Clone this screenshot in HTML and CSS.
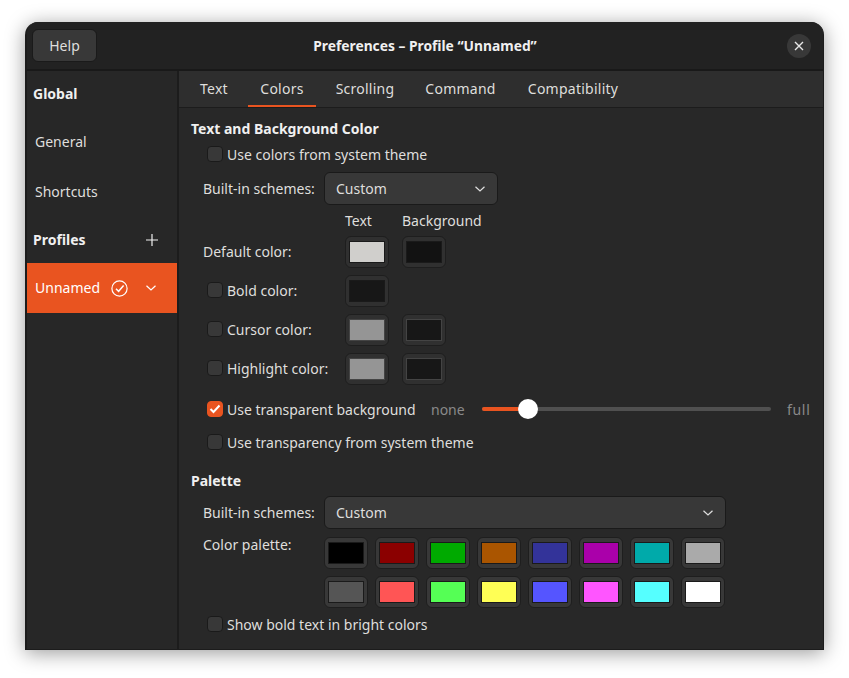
FILE: index.html
```html
<!DOCTYPE html>
<html lang="en">
<head>
    <meta charset="utf-8">
    <title>Preferences</title>
    <link rel="stylesheet" href="styles.css">
</head>
<body>
    <div class="window">
        <header class="titlebar">
            <button class="help">Help</button>
            <div class="title">Preferences – Profile “Unnamed”</div>
            <button class="close">
                <svg width="10" height="10" viewBox="0 0 10 10"><path d="M1 1 9 9M9 1 1 9" stroke="#e8e8e8" stroke-width="1.4" fill="none"/></svg>
            </button>
        </header>

        <div class="main">
            <nav class="sidebar">
                <div class="side-row side-head side-global">Global</div>
                <div class="side-row side-item">General</div>
                <div class="side-row side-item">Shortcuts</div>
                <div class="side-row side-head side-profiles">
                    <span>Profiles</span>
                    <svg class="plus" width="12" height="12" viewBox="0 0 12 12"><path d="M6 0V12M0 6H12" stroke="#f2f2f2" stroke-width="1.2" fill="none"/></svg>
                </div>
                <div class="side-row side-item selected">
                    <span class="profile-name">Unnamed</span>
                    <svg class="profile-check" width="17" height="17" viewBox="0 0 17 17"><circle cx="8.5" cy="8.5" r="7.6" stroke="#fff" stroke-width="1.2" fill="none"/><path d="M5 8.8 7.6 11.3 12.6 5.6" stroke="#fff" stroke-width="1.5" fill="none"/></svg>
                    <svg class="profile-arrow" width="10" height="6" viewBox="0 0 10 6"><path d="M.5 .7 5 5 9.5 .7" stroke="#fff" stroke-width="1.2" fill="none"/></svg>
                </div>
            </nav>

            <section class="content">
                <div class="tabs">
                    <div class="tab">Text</div>
                    <div class="tab active">Colors</div>
                    <div class="tab">Scrolling</div>
                    <div class="tab">Command</div>
                    <div class="tab">Compatibility</div>
                </div>

                <div class="page">
                    <h2 class="heading">Text and Background Color</h2>
                    <div class="check-row first-check"><span class="check"></span>Use colors from system theme</div>

                    <div class="combo-row">
                        <span class="label combo-label">Built-in schemes:</span>
                        <div class="combo combo-short"><span>Custom</span>
                            <svg width="10" height="6" viewBox="0 0 10 6"><path d="M.5 .7 5 5 9.5 .7" stroke="#dedede" stroke-width="1.2" fill="none"/></svg>
                        </div>
                    </div>

                    <div class="color-grid">
                        <span class="col-head">Text</span>
                        <span class="col-head">Background</span>

                        <span class="label grid-label">Default color:</span>
                        <span class="swatch"><i style="background:#d0cfcc"></i></span>
                        <span class="swatch"><i style="background:#121212"></i></span>

                        <span class="check-row"><span class="check"></span>Bold color:</span>
                        <span class="swatch"><i style="background:#171717"></i></span>
                        <span></span>

                        <span class="check-row"><span class="check"></span>Cursor color:</span>
                        <span class="swatch dim"><i style="background:#959595"></i></span>
                        <span class="swatch dim"><i style="background:#171717"></i></span>

                        <span class="check-row"><span class="check"></span>Highlight color:</span>
                        <span class="swatch dim"><i style="background:#959595"></i></span>
                        <span class="swatch dim"><i style="background:#171717"></i></span>
                    </div>

                    <div class="check-row slider-row">
                        <span class="check on">
                            <svg width="12" height="10" viewBox="0 0 12 10"><path d="M1.5 5 4.5 8 10.5 1.5" stroke="#fff" stroke-width="2" fill="none"/></svg>
                        </span>
                        <span class="slider-label">Use transparent background</span>
                        <span class="dim-text none">none</span>
                        <div class="slider"><div class="slider-fill" style="width:46px"></div><div class="slider-thumb"></div></div>
                        <span class="dim-text full">full</span>
                    </div>
                    <div class="check-row theme-check"><span class="check"></span>Use transparency from system theme</div>

                    <h2 class="heading palette-heading">Palette</h2>
                    <div class="combo-row palette-combo">
                        <span class="label combo-label">Built-in schemes:</span>
                        <div class="combo combo-wide"><span>Custom</span>
                            <svg width="10" height="6" viewBox="0 0 10 6"><path d="M.5 .7 5 5 9.5 .7" stroke="#dedede" stroke-width="1.2" fill="none"/></svg>
                        </div>
                    </div>

                    <div class="palette-row">
                        <span class="label combo-label palette-label">Color palette:</span>
                        <div class="palette">
                            <span class="swatch light"><i style="background:#000000"></i></span>
                            <span class="swatch light"><i style="background:#8b0000"></i></span>
                            <span class="swatch light"><i style="background:#00aa00"></i></span>
                            <span class="swatch light"><i style="background:#aa5500"></i></span>
                            <span class="swatch light"><i style="background:#333399"></i></span>
                            <span class="swatch light"><i style="background:#aa00aa"></i></span>
                            <span class="swatch light"><i style="background:#00aaaa"></i></span>
                            <span class="swatch light"><i style="background:#aaaaaa"></i></span>
                            <span class="swatch light"><i style="background:#555555"></i></span>
                            <span class="swatch light"><i style="background:#ff5555"></i></span>
                            <span class="swatch light"><i style="background:#55ff55"></i></span>
                            <span class="swatch light"><i style="background:#ffff55"></i></span>
                            <span class="swatch light"><i style="background:#5555ff"></i></span>
                            <span class="swatch light"><i style="background:#ff55ff"></i></span>
                            <span class="swatch light"><i style="background:#55ffff"></i></span>
                            <span class="swatch light"><i style="background:#ffffff"></i></span>
                        </div>
                    </div>
                    <div class="check-row bold-check"><span class="check"></span>Show bold text in bright colors</div>
                </div>
            </section>
        </div>
    </div>
</body>
</html>
```

FILE: styles.css
```css
html, body {
    margin: 0;
    padding: 0;
    background: #fff;
}
body {
    height: 678px;
    padding: 22px 25px 0;
    box-sizing: border-box;
    overflow: hidden;
    font-family: "Noto Sans", sans-serif;
    font-size: 14px;
    color: #dfdedc;
}
.window {
    width: 799px;
    height: 628px;
    display: flex;
    flex-direction: column;
    box-sizing: border-box;
    border: 1px solid #1c1c1c;
    border-top: 0;
    border-left-width: 2px;
    border-radius: 13px 13px 0 0;
    background: #282828;
    box-shadow: 0 3px 20px rgba(0, 0, 0, 0.4);
    overflow: hidden;
}
.titlebar {
    height: 47px;
    flex: none;
    display: grid;
    grid-template-columns: 1fr auto 1fr;
    align-items: center;
    background: #222222;
    border-bottom: 2px solid #191919;
}
.help {
    margin-left: 5px;
    width: 65px;
    height: 33px;
    border: 1px solid #1a1a1a;
    border-radius: 6px;
    background: #383838;
    color: #dfdedc;
    font: inherit;
}
.title {
    font-weight: 700;
    font-size: 13.8px;
    color: #f0f0f0;
}
.close {
    justify-self: end;
    margin-right: 12px;
    width: 24px;
    height: 24px;
    padding: 0;
    border: 0;
    border-radius: 50%;
    background: #383838;
    display: flex;
    align-items: center;
    justify-content: center;
}
.main {
    flex: 1;
    display: flex;
    min-height: 0;
}

/* sidebar */
.sidebar {
    width: 150px;
    flex: none;
    background: #272727;
    border-right: 2px solid #1c1c1c;
}
.side-row {
    height: 50px;
    display: flex;
    align-items: center;
    box-sizing: border-box;
}
.side-head {
    padding-left: 6px;
    font-weight: 700;
    color: #f0f0f0;
}
.side-global {
    height: 45px;
}
.side-item {
    padding-left: 8px;
}
.side-profiles {
    justify-content: space-between;
    padding-right: 19px;
    height: 47px;
}
.selected {
    background: #e95420;
    color: #fff;
}
.profile-name {
    margin-top: -2px;
}
.profile-check {
    margin-left: 11px;
}
.profile-arrow {
    margin-left: 18px;
}

/* tabs */
.content {
    flex: 1;
    min-width: 0;
}
.tabs {
    height: 37px;
    box-sizing: border-box;
    display: grid;
    grid-template-columns: 52px 68px 82px 93px 116px;
    gap: 8px;
    padding-left: 9px;
    background: #2e2e2e;
    border-bottom: 1px solid #1c1c1c;
    letter-spacing: 0.25px;
}
.tab {
    text-align: center;
    line-height: 35px;
    height: 36px;
    box-sizing: border-box;
}
.active {
    border-bottom: 2px solid #e95420;
}

/* page */
.page {
    padding: 10px 0 0 12px;
}
.heading {
    margin: 0;
    height: 22px;
    line-height: 22px;
    font-size: 14px;
    font-weight: 700;
    color: #f0f0f0;
}
.label {
    white-space: nowrap;
}
.check-row {
    display: flex;
    align-items: center;
    height: 22px;
    padding-left: 16px;
    white-space: nowrap;
}
.check {
    width: 14px;
    height: 14px;
    margin-right: 4px;
    flex: none;
    display: flex;
    align-items: center;
    justify-content: center;
    background: #383838;
    border: 1px solid #1a1a1a;
    border-radius: 4px;
}
.check.on {
    background: #e95420;
    border-color: #e95420;
}
.first-check {
    margin-top: 3px;
}
.combo-row {
    display: flex;
    align-items: center;
    margin-top: 7px;
    padding-left: 12px;
}
.combo-label {
    width: 121px;
    flex: none;
}
.combo {
    height: 33px;
    box-sizing: border-box;
    display: flex;
    align-items: center;
    justify-content: space-between;
    padding: 0 12px 0 11px;
    background: #383838;
    border: 1px solid #1a1a1a;
    border-radius: 6px;
}
.combo-short {
    width: 174px;
}
.combo-wide {
    width: 402px;
}

/* color rows */
.color-grid {
    display: grid;
    grid-template-columns: 141px 44px 44px;
    column-gap: 13px;
    row-gap: 7px;
    align-items: center;
    margin-top: 5px;
}
.color-grid .check-row, .grid-label {
    margin-top: -2px;
}
.col-head {
    height: 22px;
    line-height: 22px;
    white-space: nowrap;
    margin-bottom: -3px;
}
.col-head:first-child {
    grid-column: 2;
}
.grid-label {
    padding-left: 12px;
}
.swatch {
    width: 44px;
    height: 32px;
    box-sizing: border-box;
    padding: 4px 3px;
    background: #303030;
    border: 1px solid #1e1e1e;
    border-radius: 6px;
    display: block;
}
.swatch i {
    display: block;
    height: 100%;
    box-sizing: border-box;
    border: 1px solid #1a1a1a;
}
.swatch.dim i {
    border-color: #444;
}
.swatch.light {
    background: #383838;
}

/* transparency row */
.slider-row {
    margin-top: 13px;
    height: 22px;
}
.slider-label {
    width: 204px;
    flex: none;
}
.dim-text {
    color: #8a8a8a;
}
.none {
    width: 51px;
    flex: none;
}
.slider {
    width: 289px;
    height: 4px;
    flex: none;
    position: relative;
    background: #505050;
    border-radius: 2px;
}
.slider-fill {
    height: 100%;
    background: #e95420;
    border-radius: 2px;
}
.slider-thumb {
    position: absolute;
    left: 36px;
    top: -8px;
    width: 20px;
    height: 20px;
    border-radius: 50%;
    background: #fff;
}
.full {
    margin-left: 16px;
    letter-spacing: 0.7px;
}
.theme-check {
    margin-top: 11px;
}

/* palette */
.palette-heading {
    margin-top: 17px;
}
.palette-combo {
    margin-top: 4px;
}
.palette-row {
    display: flex;
    margin-top: 8px;
    padding-left: 12px;
}
.palette-label {
    line-height: 16px;
}
.palette {
    display: grid;
    grid-template-columns: repeat(8, 44px);
    column-gap: 7px;
    row-gap: 7px;
}
.bold-check {
    margin-top: 5px;
}
```
